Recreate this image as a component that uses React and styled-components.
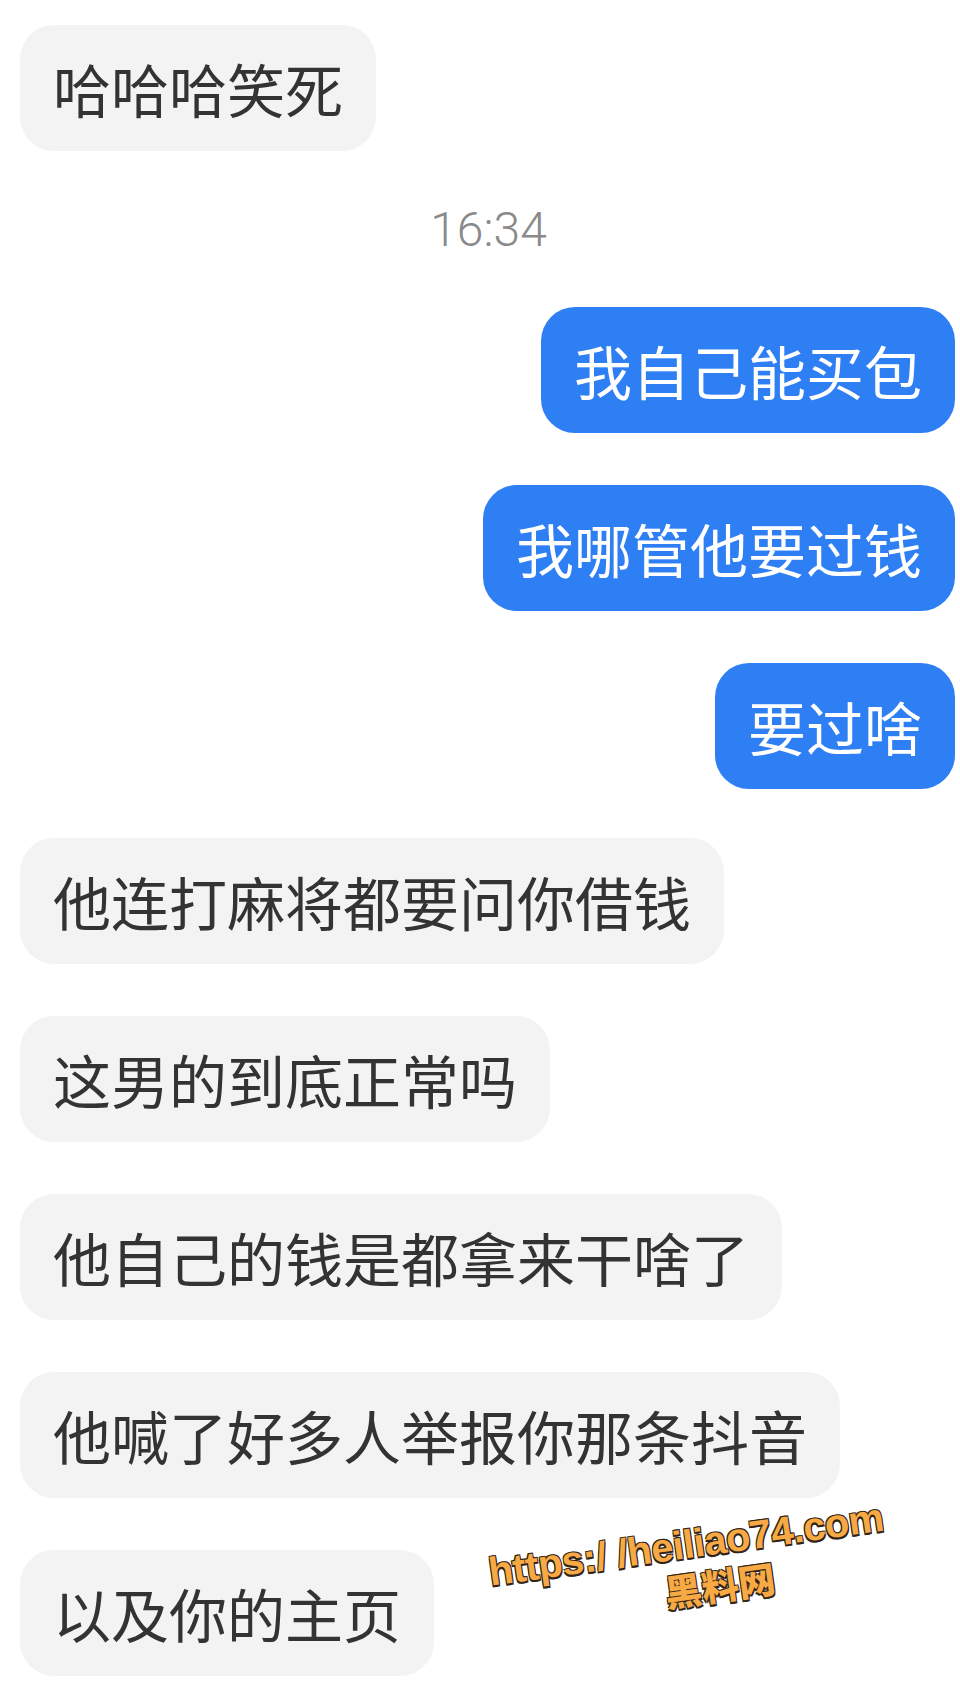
import styled, { createGlobalStyle } from "styled-components";

const GlobalStyle = createGlobalStyle`
  html, body {
    margin: 0;
    padding: 0;
    background: #ffffff;
  }
`;

const Screen = styled.div`
  position: relative;
  width: 960px;
  height: 1683px;
  overflow: hidden;
  background: #ffffff;
  font-family: "Noto Sans CJK SC", "Noto Sans", sans-serif;
`;

const Thread = styled.div`
  display: flex;
  flex-direction: column;
  gap: 52px;
  padding: 25px 5px 0 20px;
`;

const Row = styled.div`
  display: flex;
  justify-content: ${(p) => (p.$mine ? "flex-end" : "flex-start")};
  margin-top: ${(p) => p.$shift || 0}px;
`;

const Bubble = styled.div`
  display: inline-flex;
  align-items: center;
  height: 126px;
  padding: 0 33px;
  box-sizing: border-box;
  border-radius: 34px;
  font-size: 58px;
  font-weight: 400;
  line-height: 1;
  white-space: nowrap;
  background: ${(p) => (p.$mine ? "#2f7ff4" : "#f3f3f3")};
  color: ${(p) => (p.$mine ? "#ffffff" : "#333333")};
`;

const Stamp = styled.div`
  display: flex;
  justify-content: center;
  align-items: center;
  height: 52px;
  padding-left: 2px;
  font-family: Roboto, "Liberation Sans", sans-serif;
  font-size: 48px;
  font-weight: 300;
  color: #8a8a8a;
`;

const Watermark = styled.div`
  position: absolute;
  left: 490px;
  top: 1522px;
  display: flex;
  flex-direction: column;
  align-items: center;
  transform: rotate(-8deg);
  font-family: "Liberation Sans", "Noto Sans CJK SC", sans-serif;
  font-weight: 900;
  color: #f7a944;
  text-shadow: 1px 2px 0 #2e2418, -1px 2px 0 #2e2418, -1px -1px 0 #2e2418, 1px -1px 0 #2e2418;
`;

const Url = styled.div`
  font-size: 40px;
  letter-spacing: -0.5px;
  line-height: 1.1;
`;

const Brand = styled.div`
  font-family: "Noto Sans CJK SC", sans-serif;
  font-size: 37px;
  line-height: 1.2;
  padding-left: 56px;
`;

const messages = [
  { text: "哈哈哈笑死" },
  { stamp: "16:34" },
  { text: "我自己能买包", mine: true },
  { text: "我哪管他要过钱", mine: true },
  { text: "要过啥", mine: true },
  { text: "他连打麻将都要问你借钱", shift: -3 },
  { text: "这男的到底正常吗" },
  { text: "他自己的钱是都拿来干啥了" },
  { text: "他喊了好多人举报你那条抖音" },
  { text: "以及你的主页" },
];

export default function App() {
  return (
    <Screen>
      <GlobalStyle />
      <Thread>
        {messages.map((m, i) =>
          m.stamp ? (
            <Stamp key={i}>{m.stamp}</Stamp>
          ) : (
            <Row key={i} $mine={m.mine} $shift={m.shift}>
              <Bubble $mine={m.mine}>{m.text}</Bubble>
            </Row>
          )
        )}
      </Thread>
      <Watermark>
        <Url>https:/ /heiliao74.com</Url>
        <Brand>黑料网</Brand>
      </Watermark>
    </Screen>
  );
}
